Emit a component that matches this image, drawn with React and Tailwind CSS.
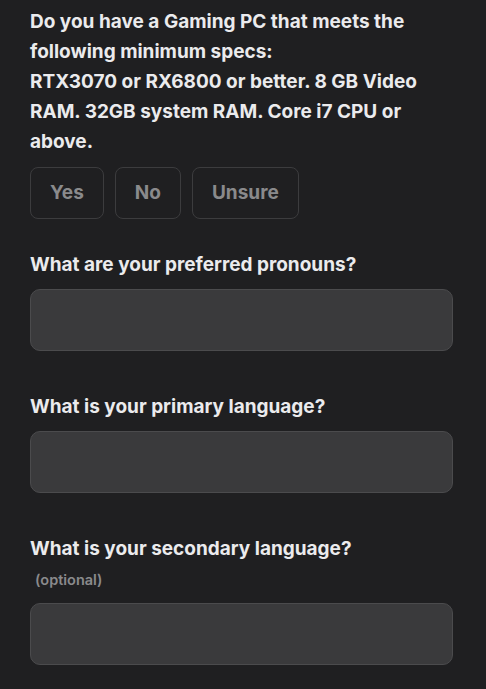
export default function App() {
  const font = { fontFamily: "Inter, 'Noto Sans', sans-serif" };
  const Input = () => (
    <div className="h-[62px] w-[423px] rounded-[10px] border border-[#4b4b4d] bg-[#3a3a3c]" />
  );
  return (
    <div className="min-h-[689px] w-[486px] bg-[#1f1f21] pl-[30px] pt-[7px]" style={font}>
      <p className="w-[428px] text-[19px] font-bold leading-[30px] text-[#ebebed]">
        Do you have a Gaming PC that meets the following minimum specs:
        <br />
        RTX3070 or RX6800 or better. 8 GB Video RAM. 32GB system RAM. Core i7 CPU or above.
      </p>
      <div className="mt-[10px] flex gap-[11px]">
        {["Yes", "No", "Unsure"].map((t) => (
          <div
            key={t}
            className="flex h-[52px] items-center rounded-[8px] border border-[#3c3c3e] px-[19px] text-[19px] font-bold text-[#8a8a8c]"
          >
            {t}
          </div>
        ))}
      </div>
      <p className="mt-[31px] text-[19px] font-bold leading-[30px] text-[#ebebed]">
        What are your preferred pronouns?
      </p>
      <div className="mt-[9px]">
        <Input />
      </div>
      <p className="mt-[41px] text-[19px] font-bold leading-[30px] text-[#ebebed]">
        What is your primary language?
      </p>
      <div className="mt-[9px]">
        <Input />
      </div>
      <p className="mt-[41px] text-[19px] font-bold leading-[30px] text-[#ebebed]">
        What is your secondary language?
      </p>
      <p className="ml-[5px] mt-[6px] text-[14.5px] font-semibold leading-[20px] text-[#8a8a8c]">(optional)</p>
      <div className="mt-[13px]">
        <Input />
      </div>
    </div>
  );
}
